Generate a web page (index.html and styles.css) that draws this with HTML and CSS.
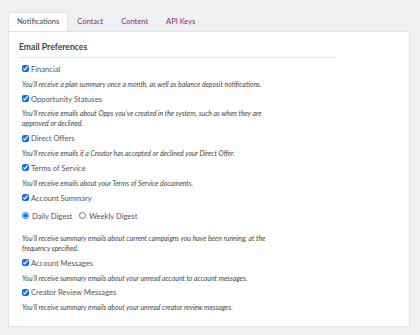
FILE: index.html
```html
<!DOCTYPE html>
<html lang="en">
<head>
  <meta charset="UTF-8">
  <title>Settings</title>
  <link rel="stylesheet" href="styles.css">
</head>
<body>
  <div class="tabs">
    <a class="tab active">Notifications</a>
    <a class="tab">Contact</a>
    <a class="tab">Content</a>
    <a class="tab">API Keys</a>
  </div>

  <div class="panel">
    <h2 class="title">Email Preferences</h2>

    <div class="pref">
      <label class="check"><input type="checkbox" checked> Financial</label>
      <p class="desc">You'll receive a plan summary once a month, as well as balance deposit notifications.</p>
    </div>
    <div class="pref">
      <label class="check"><input type="checkbox" checked> Opportunity Statuses</label>
      <p class="desc">You'll receive emails about Opps you've created in the system, such as when they are approved or declined.</p>
    </div>
    <div class="pref">
      <label class="check"><input type="checkbox" checked> Direct Offers</label>
      <p class="desc">You'll receive emails if a Creator has accepted or declined your Direct Offer.</p>
    </div>
    <div class="pref">
      <label class="check"><input type="checkbox" checked> Terms of Service</label>
      <p class="desc">You'll receive emails about your Terms of Service documents.</p>
    </div>
    <div class="pref">
      <label class="check"><input type="checkbox" checked> Account Summary</label>
      <div class="radios">
        <label class="radio"><input type="radio" name="digest" checked> Daily Digest</label>
        <label class="radio"><input type="radio" name="digest"> Weekly Digest</label>
      </div>
      <p class="desc">You'll receive summary emails about current campaigns you have been running, at the frequency specified.</p>
    </div>
    <div class="pref">
      <label class="check"><input type="checkbox" checked> Account Messages</label>
      <p class="desc">You'll receive summary emails about your unread account to account messages.</p>
    </div>
    <div class="pref">
      <label class="check"><input type="checkbox" checked> Creator Review Messages</label>
      <p class="desc">You'll receive summary emails about your unread creator review messages.</p>
    </div>
  </div>
</body>
</html>
```

FILE: styles.css
```css
body {
  margin: 0;
  padding: 12px 10px 0 8px;
  background-color: #eff0f2;
  font-family: Lato, sans-serif;
  color: #555;
}
.tabs {
  display: flex;
  height: 19px;
}
.tab {
  font-size: 7.5px;
  line-height: 19px;
  padding: 0 9px;
  color: #8a2a7a;
}
.active {
  color: #444;
  background-color: #fff;
  border: 1px solid #e2e3e6;
  border-bottom: none;
  border-radius: 2px 2px 0 0;
  padding: 0 8px;
  line-height: 18px;
}
.panel {
  background-color: #fff;
  border: 1px solid #e2e3e6;
  border-radius: 0 2px 2px 2px;
  padding: 9px 10px 15px 10px;
  height: 270px;
}
.title {
  font-size: 8.6px;
  font-weight: 700;
  line-height: 12px;
  color: #444;
  margin: 0;
  padding: 0 0 4px 0;
  width: 316px;
  border-bottom: 1px solid #e4e5e8;
}
.pref {
  margin-left: 3px;
}
.check, .radio {
  display: flex;
  align-items: center;
  font-size: 7.6px;
  height: 19.7px;
}
.pref:first-of-type .check {
  margin-top: 1px;
}
.check input, .radio input {
  width: 7px;
  height: 7px;
  margin: 0 2px 0 0;
  accent-color: #1a6ee0;
}
.radios {
  display: flex;
  gap: 7px;
  margin: 0 0 8.5px 0;
}
.radios .radio {
  height: 17px;
}
.radio input {
  width: 7px;
  height: 7px;
  margin-right: 3px;
}
.desc {
  font-size: 6.9px;
  font-style: italic;
  color: #444;
  line-height: 10px;
  margin: 0;
  width: 248px;
}
```
